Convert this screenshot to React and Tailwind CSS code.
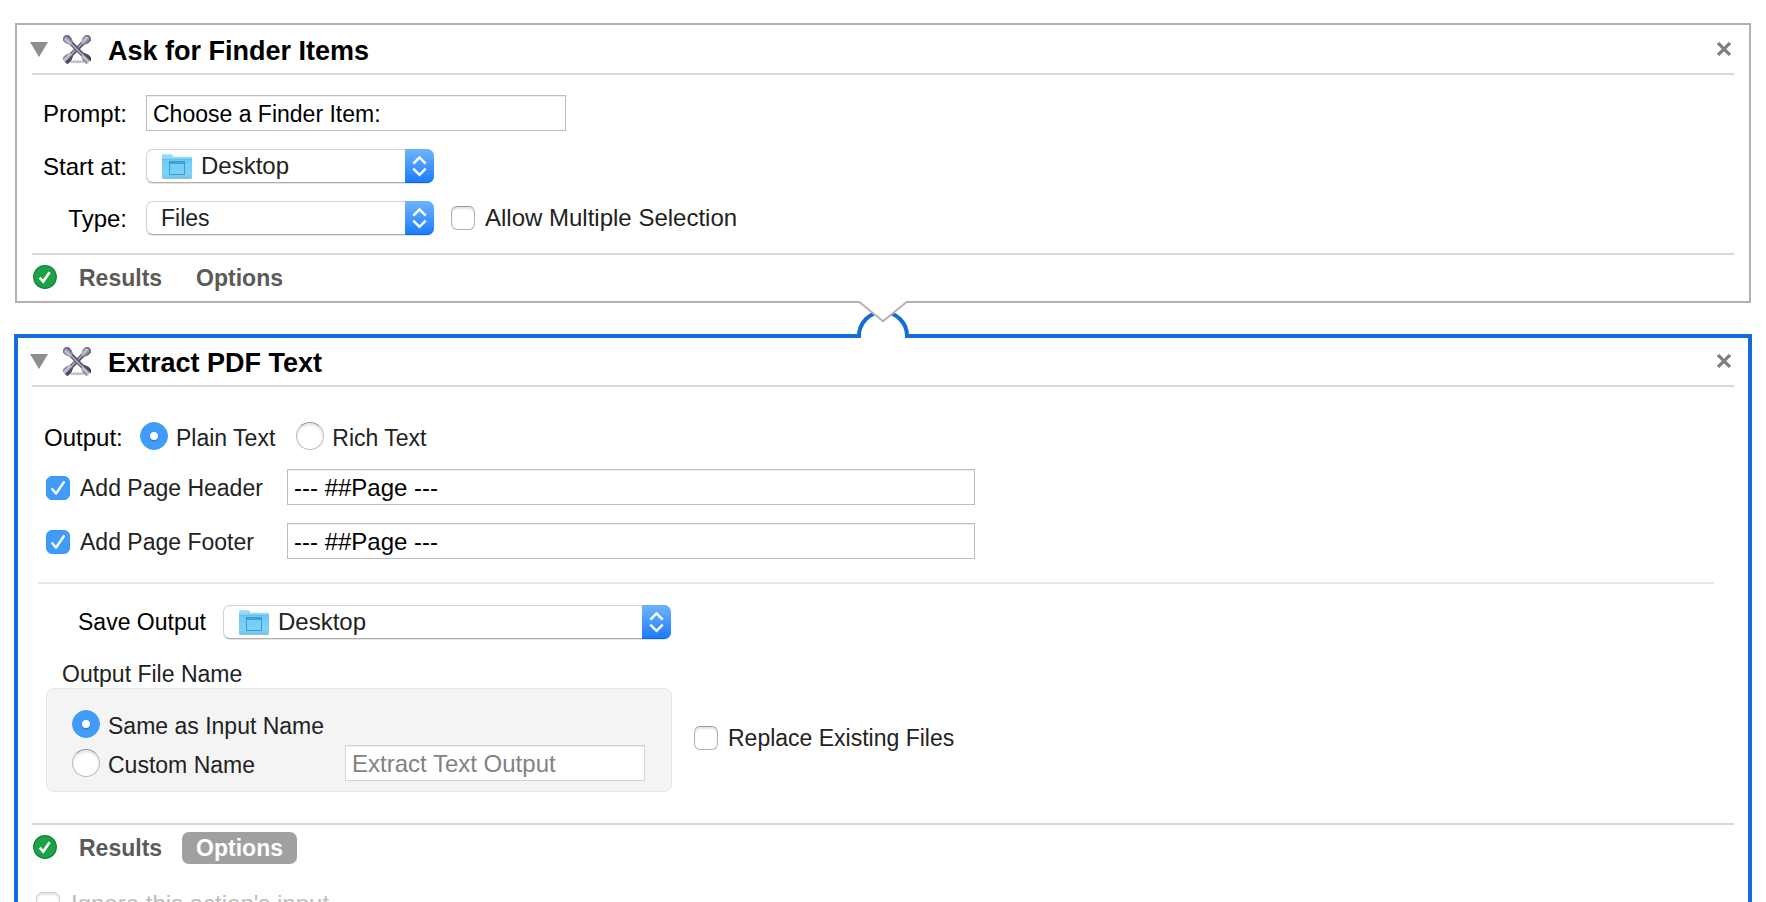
import React, { useId } from "react";

function ToolsIcon() {
  const id = useId();
  const metal = `url(#${id}-metal)`;
  return (
    <svg width="28" height="29" viewBox="0 0 28 29" aria-hidden="true">
      <defs>
        <linearGradient id={`${id}-metal`} x1="0" y1="0" x2="1" y2="0">
          <stop offset="0" stopColor="#6a6780" />
          <stop offset="0.35" stopColor="#cfcddd" />
          <stop offset="0.7" stopColor="#8a879c" />
          <stop offset="1" stopColor="#565463" />
        </linearGradient>
      </defs>
      <ellipse cx="14" cy="26.8" rx="8.5" ry="1.5" fill="#c4c4c4" />
      {[45, -45].map((angle) => (
        <g key={angle} transform={`rotate(${angle} 14 14)`}>
          <rect x="11.8" y="1" width="4.4" height="26" fill="#5b596b" />
          <rect x="12.9" y="1" width="1.5" height="26" fill="#b3b0c6" />
          <path d="M10.1 -3.2Q14 -5 17.9 -3.2V2L16.2 6H11.8L10.1 2z" fill={metal} />
          <path d="M10.1 -3.2Q14 -5 17.9 -3.2L17.3 -1.6Q14 -3 10.7 -1.6z" fill="#77738f" />
          <path d="M10.1 31.2Q14 33 17.9 31.2V26L16.2 22H11.8L10.1 26z" fill={metal} />
          <path d="M15 31.8Q17 31.6 17.9 31.2V26L16.2 22H14.9z" fill="#4b4a54" />
        </g>
      ))}
    </svg>
  );
}

function FolderIcon() {
  const id = useId();
  return (
    <svg width="30" height="25" viewBox="0 0 30 25" aria-hidden="true">
      <defs>
        <linearGradient id={id} x1="0" y1="0" x2="0" y2="1">
          <stop offset="0" stopColor="#6bc9f5" />
          <stop offset="1" stopColor="#83d5fa" />
        </linearGradient>
      </defs>
      <path d="M0 24V1.5Q0 .3 1.2 .3H9Q10 .3 10.6 1.2L11.6 2.8H29Q30 2.8 30 3.8V24z" fill="#93dbfb" />
      <path d="M0 5.5H30V23.2Q30 24 29 24H1Q0 24 0 23.2z" fill={`url(#${id})`} />
      <path d="M0 5.3H30" stroke="#55b4e0" strokeWidth="0.8" />
      <path d="M0 22H30" stroke="#62bfe8" strokeWidth="0.7" />
      <path d="M.5 24.2H29.5" stroke="#4b9dc6" strokeWidth="0.9" />
      <rect x="7.5" y="7.5" width="15" height="13" fill="none" stroke="#3d9ccd" />
      <path d="M7.5 9H22.5" stroke="#2f8dc0" strokeWidth="1.3" />
    </svg>
  );
}

function TickBox({ className = "", ...props }) {
  return (
    <span className="relative block size-6 shrink-0">
      <input
        type="checkbox"
        className="peer block size-6 appearance-none rounded-md border border-[#b4b4b4] border-t-[#9c9c9c] bg-white shadow-[inset_0_2px_2px_rgba(0,0,0,0.12)] checked:border-[#3b93f5] checked:bg-[#419bf9] checked:shadow-none disabled:border-[#cfcfcf]"
        {...props}
      />
      <svg
        className="pointer-events-none absolute inset-0 hidden peer-checked:block"
        width="24"
        height="24"
        viewBox="0 0 24 24"
        fill="none"
        stroke="#fff"
        strokeWidth="2.4"
        strokeLinecap="round"
        strokeLinejoin="round"
        aria-hidden="true"
      >
        <path d="M6.3 13.2L10 17.6L17.8 6.2" />
      </svg>
    </span>
  );
}

function Radio({ children, ...props }) {
  return (
    <label className="flex items-center gap-2 text-[#222]">
      <span className="relative block size-7 shrink-0">
        <input
          type="radio"
          className="peer block size-7 appearance-none rounded-full border border-[#bdbdbd] border-t-[#999] bg-white shadow-[inset_0_2px_3px_rgba(0,0,0,0.12)] checked:border-[#419bf9] checked:bg-[#419bf9] checked:shadow-none"
          {...props}
        />
        <span className="pointer-events-none absolute top-[10px] left-[10px] hidden size-2 rounded-full bg-white shadow-[0_1px_2px_rgba(0,0,0,0.3)] peer-checked:block" />
      </span>
      <span className="pt-1 leading-6">{children}</span>
    </label>
  );
}

function PopUp({ id, value, folder = false, className }) {
  return (
    <div className={`relative h-[34px] ${className}`}>
      <select
        id={id}
        defaultValue={value}
        className={`h-full w-full appearance-none rounded-[7px] border border-[#d2d2d2] border-b-[#b0b0b0] bg-white pr-8 text-[#222] shadow-[0_1px_1px_rgba(0,0,0,0.12)] ${folder ? "pl-[54px] text-2xl leading-7" : "pl-[14px]"}`}
      >
        <option>{value}</option>
      </select>
      {folder && (
        <span className="pointer-events-none absolute top-[5px] left-4">
          <FolderIcon />
        </span>
      )}
      <span className="pointer-events-none absolute top-0 right-0 flex h-full w-[29px] items-center justify-center rounded-r-[7px] border-b border-[#0f62f5] bg-linear-to-b from-[#6cb3fa] to-[#167dfd]">
        <svg width="15" height="22" viewBox="0 0 15 22" fill="none" stroke="#fff" strokeWidth="2.5" aria-hidden="true">
          <path d="M1.3 8.6L7.5 2.4L13.7 8.6M1.3 13.6L7.5 19.8L13.7 13.6" />
        </svg>
      </span>
    </div>
  );
}

function TextBox({ className = "", ...props }) {
  return (
    <input
      type="text"
      className={`h-9 border bg-white px-1.5 pt-0.5 text-black shadow-[inset_0_1px_0_#eee] placeholder:text-[#828282] ${className}`}
      {...props}
    />
  );
}

function Rule() {
  return <div className="mx-[15px] h-0.5 bg-[#d8d8d8]" />;
}

function ActionCard({ title, selected = false, optionsOpen = false, children, options }) {
  return (
    <section
      aria-label={title}
      className={`border-2 bg-white ${selected ? "grow border-transparent outline-4 -outline-offset-3 outline-[#126dd6]" : "border-[#b2b2b2]"}`}
    >
      <header className="flex h-12 items-center px-[13px]">
        <button type="button" aria-label="Collapse">
          <svg width="18" height="15" viewBox="0 0 18 15" aria-hidden="true">
            <path d="M0 0H18L9 15z" fill="#8e8e8e" />
          </svg>
        </button>
        <span className="ml-[15px]">
          <ToolsIcon />
        </span>
        <h2 className="ml-[17px] pt-[3px] text-[27px] leading-8 font-bold">{title}</h2>
        <button type="button" aria-label="Remove" className="mr-[5px] ml-auto">
          <svg width="14" height="14" viewBox="0 0 14 14" stroke="#7f7f7f" strokeWidth="3.2" aria-hidden="true">
            <path d="M1 1L13 13M13 1L1 13" />
          </svg>
        </button>
      </header>
      <Rule />
      {children}
      <Rule />
      <footer className="flex h-[46px] items-start pt-[7px] pl-4 font-bold text-[#5a5a5a]">
        <svg className="mt-[3px]" width="24" height="24" viewBox="0 0 24 24" aria-hidden="true">
          <circle cx="12" cy="12" r="11.3" fill="#1ba345" stroke="#118336" strokeWidth="1.2" />
          <path d="M6.7 12.6L10.2 16.6L16.6 7.2" fill="none" stroke="#fff" strokeWidth="2.6" />
        </svg>
        <button type="button" className="ml-2 h-8 px-[14px]">
          Results
        </button>
        <button
          type="button"
          aria-expanded={optionsOpen}
          className={`ml-1.5 h-8 rounded-[7px] px-[14px] ${optionsOpen ? "bg-[#a0a0a0] text-white" : ""}`}
        >
          Options
        </button>
      </footer>
      {options}
    </section>
  );
}

function Connector() {
  return (
    <div className="relative h-8 shrink-0">
      <svg
        className="absolute -top-0.5 left-1/2 z-10 -translate-x-1/2"
        width="56"
        height="37"
        viewBox="0 0 56 37"
        aria-hidden="true"
      >
        <path d="M4 37V35A24 24 0 0 1 52 35V37" fill="#fff" stroke="#126dd6" strokeWidth="4" />
        <path d="M3 0L4.3 1L28 20.3L51.7 1L53 0z" fill="#fff" />
        <path d="M3 1H4.3L28 20.3L51.7 1H53" fill="none" stroke="#b2b2b2" strokeWidth="2" />
      </svg>
    </div>
  );
}

function Field({ id, label, children }) {
  return (
    <div className="flex items-center gap-[19px]">
      <label htmlFor={id} className="w-[110px] pt-0.5 text-right text-2xl leading-7">
        {label}
      </label>
      {children}
    </div>
  );
}

export default function App() {
  return (
    <main className="flex h-screen flex-col overflow-hidden bg-white px-[15px] pt-[23px] font-['Liberation_Sans',Arial,sans-serif] text-[23px] leading-7 text-black">
      <ActionCard title="Ask for Finder Items">
        <div className="flex flex-col gap-[18px] pt-5 pb-[18px]">
          <Field id="prompt" label="Prompt:">
            <TextBox id="prompt" defaultValue="Choose a Finder Item:" className="w-[420px] border-[#bebebe]" />
          </Field>
          <Field id="start" label="Start at:">
            <PopUp id="start" value="Desktop" folder className="w-72" />
          </Field>
          <Field id="type" label="Type:">
            <div className="flex items-center gap-[17px]">
              <PopUp id="type" value="Files" className="w-72" />
              <label className="flex items-center gap-[10px] text-2xl leading-7 text-[#222]">
                <TickBox />
                Allow Multiple Selection
              </label>
            </div>
          </Field>
        </div>
      </ActionCard>

      <Connector />

      <ActionCard
        title="Extract PDF Text"
        selected
        optionsOpen
        options={
          <label className="flex items-center gap-[11px] pt-[19px] pl-[19px] text-2xl leading-7 text-[#bcbcbc]">
            <TickBox disabled />
            Ignore this action's input
          </label>
        }
      >
        <div className="px-[21px] pt-[35px] pb-[23px]">
          <fieldset className="flex h-7 items-center pl-1.5">
            <legend className="float-left w-24 pt-1 text-2xl leading-6">Output:</legend>
            <div className="flex gap-[21px]">
              <Radio name="output" defaultChecked>Plain Text</Radio>
              <Radio name="output">Rich Text</Radio>
            </div>
          </fieldset>
          <div className="mt-[19px] flex flex-col gap-[18px] pl-2">
            {["Header", "Footer"].map((part) => (
              <div key={part} className="flex items-center">
                <label className="flex w-[241px] items-center gap-[10px] pt-0.5 text-[#222]">
                  <TickBox defaultChecked />
                  Add Page {part}
                </label>
                <TextBox
                  aria-label={`${part} text`}
                  defaultValue="--- ##Page ---"
                  className="w-[688px] border-[#bebebe] text-2xl leading-7"
                />
              </div>
            ))}
          </div>
        </div>
        <div className="mr-[35px] ml-[21px] h-0.5 bg-[#e6e6e6]" />
        <div className="px-[29px] pt-[21px] pb-[31px]">
          <div className="flex items-center">
            <label htmlFor="save" className="w-[177px] pl-8">Save Output</label>
            <PopUp id="save" value="Desktop" folder className="w-[448px]" />
          </div>
          <h3 id="file-name" className="mt-[21px] pl-4 text-[#222]">Output File Name</h3>
          <div className="flex items-center gap-[22px]">
            <div
              role="radiogroup"
              aria-labelledby="file-name"
              className="flex w-[626px] flex-col gap-[7px] rounded-lg border border-[#e6e6e6] bg-[#f4f4f4] pt-[21px] pr-[26px] pb-[10px] pl-[25px]"
            >
              <Radio name="file" defaultChecked>Same as Input Name</Radio>
              <div className="flex items-center justify-between">
                <Radio name="file">Custom Name</Radio>
                <TextBox
                  aria-label="Custom file name"
                  placeholder="Extract Text Output"
                  className="w-[300px] border-[#d4d4d4] text-2xl leading-7"
                />
              </div>
            </div>
            <label className="flex items-center gap-[10px] pb-1 text-[#222]">
              <TickBox />
              Replace Existing Files
            </label>
          </div>
        </div>
      </ActionCard>
    </main>
  );
}
